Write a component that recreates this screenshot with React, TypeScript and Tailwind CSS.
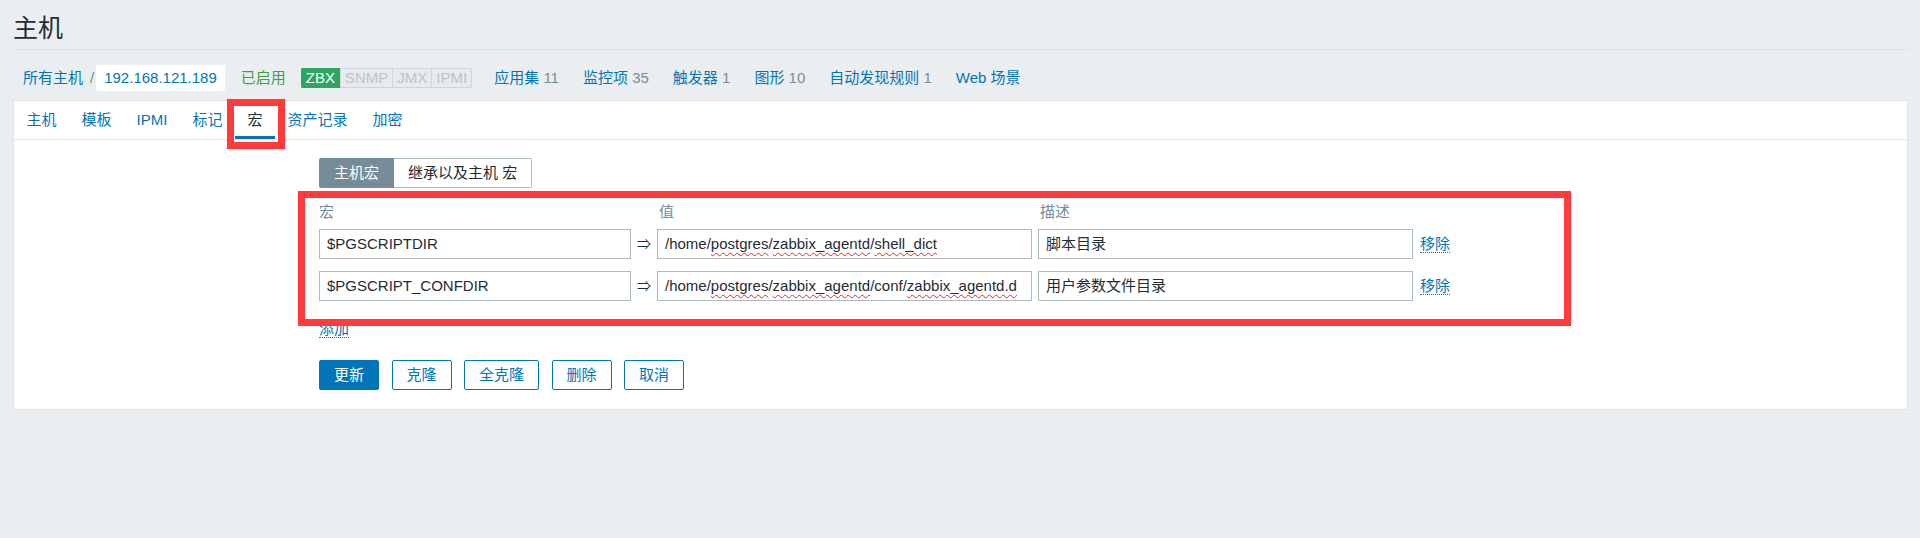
import React from 'react';

const FONT = "font-['Liberation_Sans','Noto_Sans_CJK_SC',sans-serif]";

const TABS = ['主机', '模板', 'IPMI', '标记', '宏', '资产记录', '加密'];

const LINKS: { label: string; count?: string }[] = [
  { label: '应用集', count: '11' },
  { label: '监控项', count: '35' },
  { label: '触发器', count: '1' },
  { label: '图形', count: '10' },
  { label: '自动发现规则', count: '1' },
  { label: 'Web 场景' },
];

// spell-check squiggle, as the browser draws it under unknown words
const Sq: React.FC<{ children: React.ReactNode }> = ({ children }) => (
  <span className="underline decoration-wavy decoration-[#e0262b] decoration-1 underline-offset-[3px]">
    {children}
  </span>
);

const Field: React.FC<{ className: string; children: React.ReactNode }> = ({ className, children }) => (
  <div
    className={`flex h-[30px] items-center overflow-hidden whitespace-nowrap border border-[#acbbc2] bg-white px-[7px] text-[15px] leading-[18px] text-[#1f2c33] ${className}`}
  >
    <span>{children}</span>
  </div>
);

const MacroRow: React.FC<{ macro: string; value: React.ReactNode; description: string }> = ({
  macro,
  value,
  description,
}) => (
  <div className="flex items-center">
    <Field className="w-[312px]">{macro}</Field>
    <div className="flex w-[26px] justify-center text-[14px] text-[#1f2c33]">⇒</div>
    <Field className="w-[375px]">{value}</Field>
    <Field className="ml-[6px] w-[375px]">{description}</Field>
    <a className="ml-[7px] border-b border-dotted border-[#0275b8] text-[15px] leading-[17px] text-[#0275b8]">
      移除
    </a>
  </div>
);

export default function App() {
  return (
    <div className={`relative min-h-[538px] bg-[#ebeef0] ${FONT}`}>
      <div className="pl-[13px] pr-[12px]">
        <header className="border-b border-[#dde2e6] pb-[6px] pt-[13px]">
          <h1 className="text-[25px] leading-[30px] text-[#1f2c33]">主机</h1>
        </header>

        {/* breadcrumbs and host status */}
        <div className="mt-[15px] flex h-[26px] items-center pl-[10px] text-[15px] leading-[18px]">
          <a className="text-[#0275b8]">所有主机</a>
          <span className="ml-[7px] mr-[2px] text-[#768d99]">/</span>
          <span className="flex h-[26px] items-center rounded-[2px] bg-white px-[8px] text-[#0275b8]">
            192.168.121.189
          </span>
          <span className="ml-[16px] text-[#429e47]">已启用</span>
          <div className="ml-[15px] flex h-[20px] overflow-hidden rounded-[2px] text-[15px] leading-[18px]">
            <span className="border border-[#2fa55f] bg-[#2fa55f] px-[4px] text-white">ZBX</span>
            <span className="border border-[#cfd6da] bg-[#e8ebed] px-[4px] text-[#bcc5ca]">SNMP</span>
            <span className="border border-l-0 border-[#cfd6da] bg-[#e8ebed] px-[4px] text-[#bcc5ca]">JMX</span>
            <span className="border border-l-0 border-[#cfd6da] bg-[#e8ebed] px-[4px] text-[#bcc5ca]">IPMI</span>
          </div>
          <div className="ml-[22px] flex gap-[24px]">
            {LINKS.map((l) => (
              <span key={l.label}>
                <a className="text-[#0275b8]">{l.label}</a>
                {l.count && <span className="text-[#768d99]"> {l.count}</span>}
              </span>
            ))}
          </div>
        </div>

        {/* panel */}
        <div className="mt-[9px] border border-[#dfe4e7] bg-white">
          <nav className="flex h-[39px] border-b border-[#dfe4e7] text-[15px] leading-[18px]">
            {TABS.map((t) => {
              const active = t === '宏';
              return (
                <div
                  key={t}
                  className={`relative flex h-[38px] items-center px-[12.5px] ${
                    active ? 'text-[#1f2c33]' : 'text-[#0275b8]'
                  }`}
                >
                  {t}
                  {active && <span className="absolute bottom-0 left-0 right-0 h-[3px] bg-[#0275b8]" />}
                </div>
              );
            })}
          </nav>

          <div className="pb-[19px] pl-[305px] pt-[18px]">
            <div className="flex h-[30px] text-[15px] leading-[18px]">
              <span className="flex items-center rounded-l-[2px] bg-[#768d99] px-[15px] text-white">主机宏</span>
              <span className="flex items-center rounded-r-[2px] border border-l-0 border-[#acbbc2] bg-white px-[14px] text-[#1f2c33]">
                继承以及主机 宏
              </span>
            </div>

            <div className="mt-[15px] flex text-[15px] leading-[18px] text-[#768d99]">
              <span className="w-[339px]">宏</span>
              <span className="w-[381px] pl-[1px]">值</span>
              <span className="pl-[1px]">描述</span>
            </div>

            <div className="mt-[8px] flex flex-col gap-[12px]">
              <MacroRow
                macro="$PGSCRIPTDIR"
                value={
                  <>
                    /home/<Sq>postgres</Sq>/<Sq>zabbix_agentd</Sq>/<Sq>shell_dict</Sq>
                  </>
                }
                description="脚本目录"
              />
              <MacroRow
                macro="$PGSCRIPT_CONFDIR"
                value={
                  <>
                    /home/<Sq>postgres</Sq>/<Sq>zabbix_agentd</Sq>/conf/<Sq>zabbix_agentd.d</Sq>
                  </>
                }
                description="用户参数文件目录"
              />
            </div>

            <div className="mt-[20px] flex">
              <a className="border-b border-dotted border-[#0275b8] text-[15px] leading-[16px] text-[#0275b8]">添加</a>
            </div>

            <div className="mt-[22px] flex gap-[12.5px] text-[15px] leading-[18px]">
              <button className="h-[30px] rounded-[2px] border border-[#0275b8] bg-[#0275b8] px-[14px] text-white">
                更新
              </button>
              {['克隆', '全克隆', '删除', '取消'].map((b) => (
                <button
                  key={b}
                  className="h-[30px] rounded-[2px] border border-[#0275b8] bg-white px-[14px] text-[#0275b8]"
                >
                  {b}
                </button>
              ))}
            </div>
          </div>
        </div>
      </div>

      {/* red annotation frames drawn over the screenshot */}
      <div className="pointer-events-none absolute left-[227px] top-[99px] h-[50px] w-[58px] border-[7px] border-[#ff3b3b]" />
      <div className="pointer-events-none absolute left-[298px] top-[191px] h-[135px] w-[1273px] border-[7px] border-[#ff3b3b]" />
    </div>
  );
}
